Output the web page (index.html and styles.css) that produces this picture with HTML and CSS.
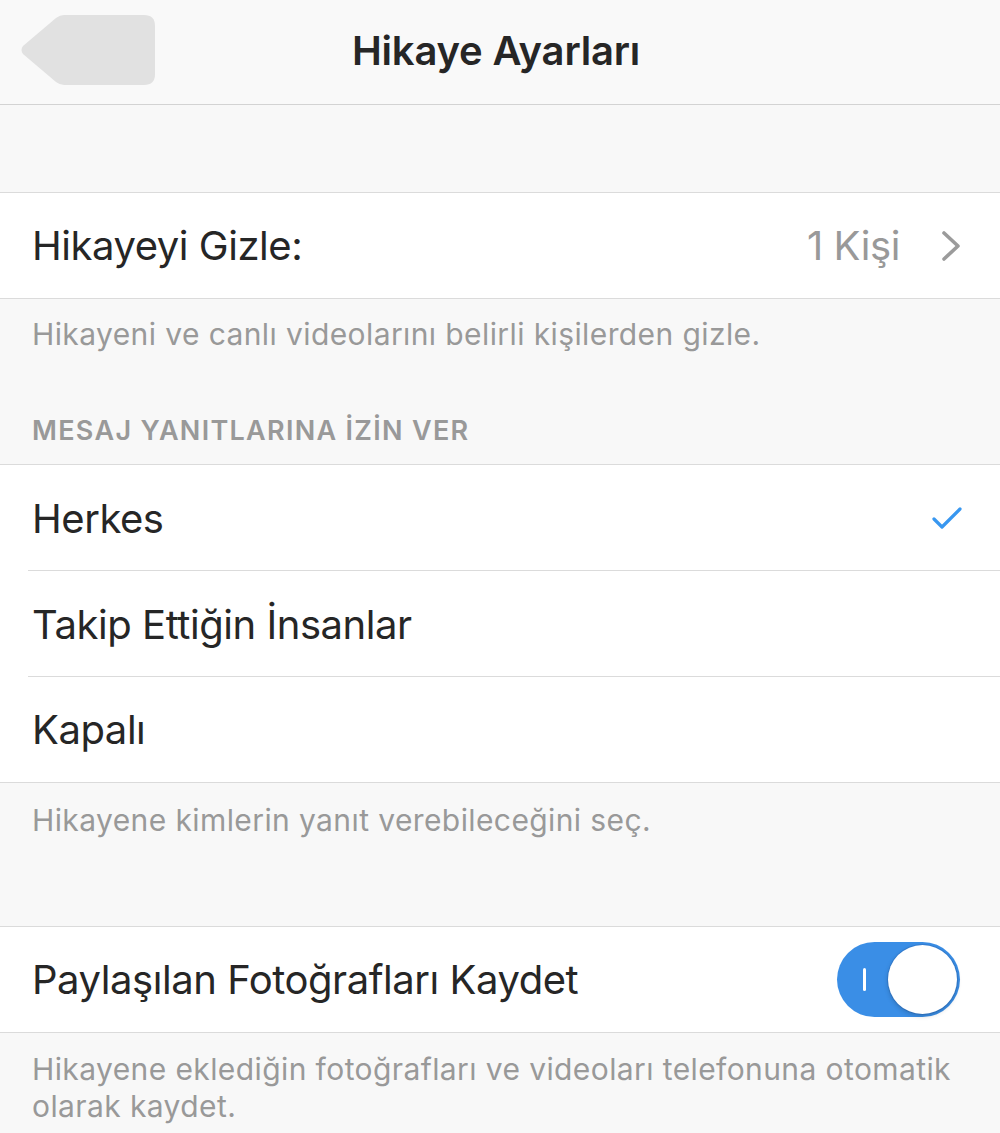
FILE: index.html
```html
<!DOCTYPE html>
<html lang="tr">
<head>
<meta charset="utf-8">
<title>Hikaye Ayarları</title>
<link rel="stylesheet" href="styles.css">
</head>
<body>
<header class="nav">
  <div class="nav-side">
    <svg class="back" width="136" height="72" viewBox="0 0 136 72" aria-hidden="true">
      <path d="M44 1 H124 Q135 1 135 12 V60 Q135 71 124 71 H44 Q40 71 36 68 L3 40 Q0 36 3 32 L36 4 Q40 1 44 1 Z" fill="#e1e1e1"/>
    </svg>
  </div>
  <h1 class="nav-title">Hikaye Ayarları</h1>
  <div class="nav-side"></div>
</header>

<div class="spacer-top"></div>

<section class="group">
  <div class="row">
    <span class="row-label">Hikayeyi Gizle:</span>
    <span class="row-value">1 Kişi
      <svg class="chevron" width="20" height="32" viewBox="0 0 20 32" aria-hidden="true"><path d="M3 3 L17 16 L3 29" fill="none" stroke="#9b9b9b" stroke-width="3.6" stroke-linecap="round" stroke-linejoin="round"/></svg>
    </span>
  </div>
</section>
<p class="note note-first">Hikayeni ve canlı videolarını belirli kişilerden gizle.</p>

<h2 class="section-title">MESAJ YANITLARINA İZİN VER</h2>
<section class="group">
  <div class="row row-inset">
    <span class="row-label">Herkes</span>
    <svg class="check" width="30" height="24" viewBox="0 0 30 24" aria-hidden="true"><path d="M2 13 L10 21 L28 3" fill="none" stroke="#3897f0" stroke-width="3.2" stroke-linecap="round" stroke-linejoin="round"/></svg>
  </div>
  <div class="row row-inset">
    <span class="row-label">Takip Ettiğin İnsanlar</span>
  </div>
  <div class="row">
    <span class="row-label">Kapalı</span>
  </div>
</section>
<p class="note note-mid">Hikayene kimlerin yanıt verebileceğini seç.</p>

<section class="group">
  <div class="row">
    <span class="row-label">Paylaşılan Fotoğrafları Kaydet</span>
    <span class="toggle"><span class="toggle-mark"></span><span class="toggle-knob"></span></span>
  </div>
</section>
<p class="note note-last">Hikayene eklediğin fotoğrafları ve videoları telefonuna otomatik olarak kaydet.</p>
</body>
</html>
```

FILE: styles.css
```css
* { box-sizing: border-box; }
html, body { margin: 0; padding: 0; }
body {
  background: #f8f8f8;
  font-family: Inter, "Noto Sans", "Liberation Sans", sans-serif;
  color: #262626;
  width: 1000px;
  overflow: hidden;
}
.nav {
  height: 105px;
  display: grid;
  grid-template-columns: 1fr auto 1fr;
  align-items: center;
  background: #f9f9f9;
  border-bottom: 1px solid #d3d3d3;
}
.nav-side { display: flex; align-items: center; padding-left: 20px; padding-bottom: 5px; }
.back { display: block; }
.nav-title {
  margin: 0;
  font-size: 40px;
  font-weight: 600;
  letter-spacing: -0.2px;
  color: #262626;
  padding-bottom: 4px;
  padding-right: 8px;
}
.spacer-top { height: 87px; }
.group {
  background: #fff;
  border-top: 1px solid #dbdbdb;
  border-bottom: 1px solid #dbdbdb;
}
.row {
  height: 105px;
  display: flex;
  align-items: center;
  justify-content: space-between;
  padding: 0 40px 0 32px;
  position: relative;
}
.row-inset::after {
  content: "";
  position: absolute;
  left: 28px; right: 0; bottom: 0;
  height: 1px;
  background: #dbdbdb;
}
.row-inset { height: 106px; }
.row-label {
  font-size: 40px;
  letter-spacing: -0.45px;
}
.row-value {
  display: flex;
  align-items: center;
  gap: 41px;
  font-size: 40px;
  letter-spacing: -0.4px;
  color: #999;
}
.chevron { display: block; margin-right: -1px; }
.check { display: block; margin-right: -2px; }
.note {
  margin: 0;
  padding: 0 32px;
  font-size: 30px;
  line-height: 37px;
  color: #999;
  letter-spacing: 0.4px;
}
.note-first { padding-top: 17px; }
.note-mid { padding-top: 19px; padding-bottom: 87px; }
.note-last { padding-top: 18px; }
.section-title {
  margin: 0;
  padding: 63px 32px 18px;
  font-size: 27px;
  line-height: 30px;
  font-weight: 600;
  color: #999;
  letter-spacing: 1.3px;
}
.toggle {
  position: relative;
  display: block;
  width: 123px;
  height: 75px;
  border-radius: 38px;
  background: #3a8ee6;
  margin-right: 0;
}
.toggle-mark {
  position: absolute;
  left: 26px; top: 26px;
  width: 3px; height: 23px;
  background: #fff;
  border-radius: 2px;
}
.toggle-knob {
  position: absolute;
  right: 3px; top: 3px;
  width: 69px; height: 69px;
  border-radius: 50%;
  background: #fff;
  box-shadow: 0 2px 5px rgba(0,0,0,0.2), 0 0 0 1px rgba(40,100,180,0.35);
}
```
